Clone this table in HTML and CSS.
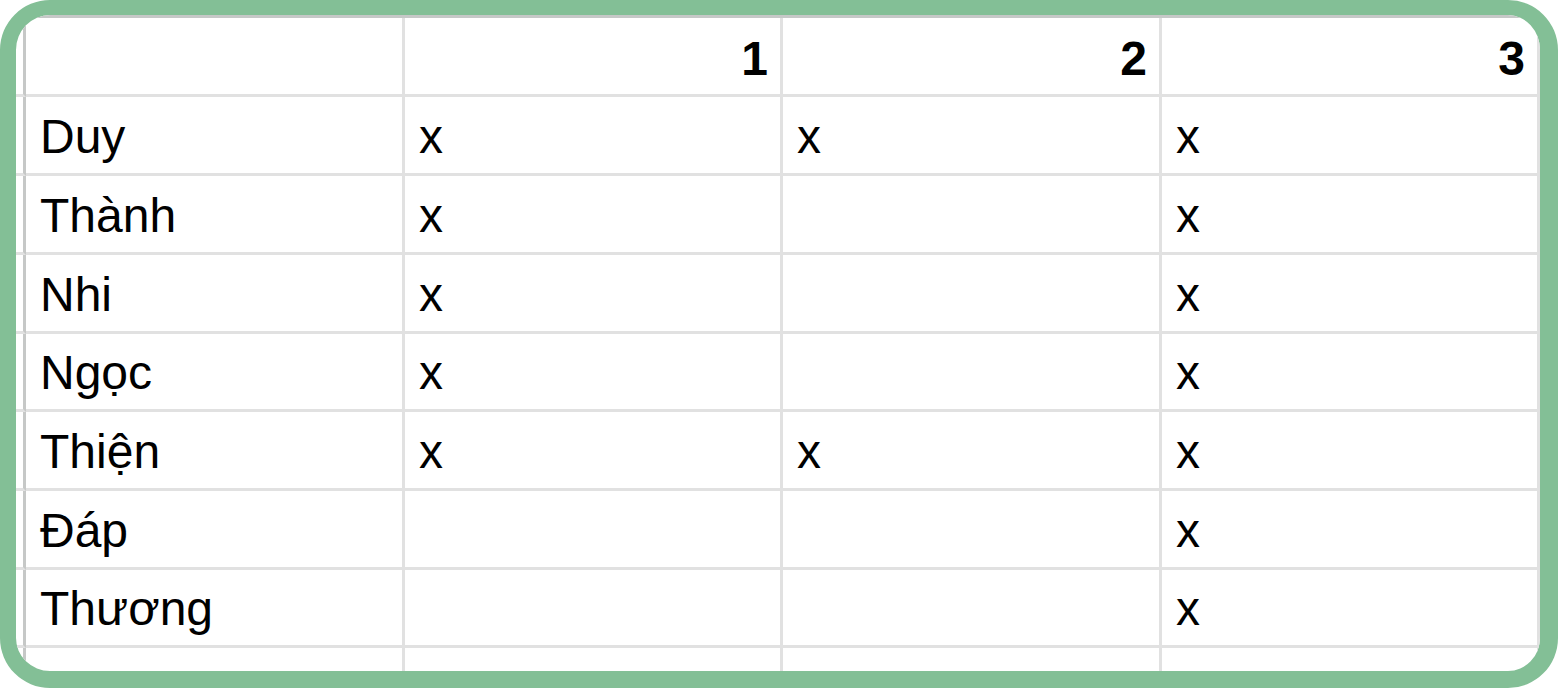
FILE: index.html
```html
<!DOCTYPE html>
<html lang="vi">
<head>
<meta charset="utf-8">
<title>Sheet</title>
<link rel="stylesheet" href="styles.css">
</head>
<body>
<div class="frame">
  <div class="sheet">
    <div class="rn"></div><div class="c hdr"></div><div class="c hdr">1</div><div class="c hdr">2</div><div class="c hdr">3</div>
    <div class="rn"></div><div class="c">Duy</div><div class="c">x</div><div class="c">x</div><div class="c">x</div>
    <div class="rn"></div><div class="c">Thành</div><div class="c">x</div><div class="c"></div><div class="c">x</div>
    <div class="rn"></div><div class="c">Nhi</div><div class="c">x</div><div class="c"></div><div class="c">x</div>
    <div class="rn"></div><div class="c">Ngọc</div><div class="c">x</div><div class="c"></div><div class="c">x</div>
    <div class="rn"></div><div class="c">Thiện</div><div class="c">x</div><div class="c">x</div><div class="c">x</div>
    <div class="rn"></div><div class="c">Đáp</div><div class="c"></div><div class="c"></div><div class="c">x</div>
    <div class="rn"></div><div class="c">Thương</div><div class="c"></div><div class="c"></div><div class="c">x</div>
    <div class="rn"></div><div class="c"></div><div class="c"></div><div class="c"></div><div class="c"></div>
  </div>
</div>
</body>
</html>
```
FILE: styles.css
```css
html, body {
  margin: 0;
  padding: 0;
  background: #ffffff;
}
.frame {
  box-sizing: border-box;
  width: 1558px;
  height: 688px;
  border-style: solid;
  border-color: #83bf96;
  border-width: 15px 18px 17px 16px;
  border-radius: 50px;
  overflow: hidden;
  background: #ffffff;
}
.sheet {
  display: grid;
  grid-template-columns: 10px 379px 378px 379px 378px;
  grid-template-rows: 79px 79px 79px 79px 78px 79px 79px 78px 40px;
  border-top: 3px solid #c6c8c7;
  font-family: "Liberation Sans", Arial, sans-serif;
  font-size: 48px;
  line-height: 48px;
  color: #000000;
}
.rn {
  border-right: 3px solid #c6c8c7;
  border-bottom: 3px solid #e1e1e1;
}
.c {
  box-sizing: border-box;
  border-right: 3px solid #e1e1e1;
  border-bottom: 3px solid #e1e1e1;
  display: flex;
  align-items: flex-end;
  padding: 0 12px 12px 14px;
  white-space: nowrap;
}
.hdr {
  justify-content: flex-end;
  font-weight: bold;
  padding: 0 12px 11px 12px;
}
```
